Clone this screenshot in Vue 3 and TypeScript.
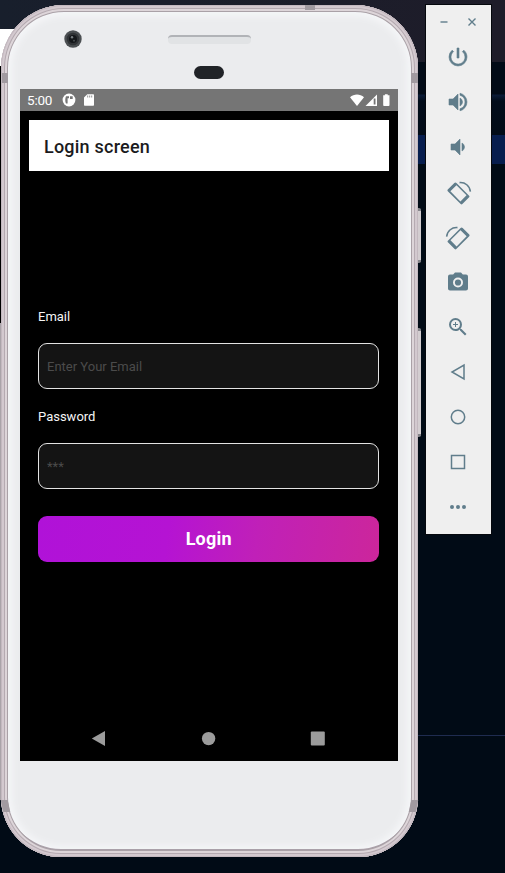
<script setup lang="ts">
interface Tool {
  name: string
  size: number
  fill?: string
  stroke?: string
  heavy?: boolean
}

const tools: Tool[] = [
  { name: 'Power', size: 24, heavy: true, fill: 'M13 3h-2v10h2V3zm4.83 2.17l-1.42 1.42A6.92 6.92 0 0 1 19 12a7 7 0 1 1-11.42-5.42L6.17 5.17A8.93 8.93 0 0 0 3 12a9 9 0 0 0 18 0c0-2.74-1.23-5.18-3.17-6.83z' },
  { name: 'Volume up', size: 24, heavy: true, fill: 'M3 9v6h4l5 5V4L7 9H3zm13.5 3A4.5 4.5 0 0 0 14 7.97v8.05A4.47 4.47 0 0 0 16.5 12zM14 3.23v2.06a7 7 0 0 1 0 13.42v2.06a9 9 0 0 0 0-17.54z' },
  { name: 'Volume down', size: 24, heavy: true, fill: 'M18.5 12A4.5 4.5 0 0 0 16 7.97v8.05A4.47 4.47 0 0 0 18.5 12zM5 9v6h4l5 5V4L9 9H5z' },
  { name: 'Rotate left', size: 25, fill: 'M8 2.800 1.700 9.100Q.9 9.900 1.700 10.700L14.100 23.100Q14.900 23.900 15.700 23.100L22.200 16.600Q23 15.800 22.200 15L10 2.800Q9 1.800 8 2.800zM4.200 10.900 10.060 5.100 19.700 14.740 13.840 20.600z', stroke: 'M13 2.500c5.300-.5 9.800 3.100 10.400 8.600' },
  { name: 'Rotate right', size: 25, fill: 'M16 2.800 22.300 9.100Q23.100 9.900 22.300 10.700L9.900 23.100Q9.100 23.900 8.300 23.100L1.800 16.600Q1 15.800 1.800 15L14 2.800Q15 1.800 16 2.800zM19.800 10.900 13.940 5.100 4.300 14.740 10.160 20.600z', stroke: 'M11 2.500C5.700 2 1.200 5.600.6 11.100' },
  { name: 'Camera', size: 24, fill: 'M9 2.5 7.17 4.5H4a2 2 0 0 0-2 2v12c0 1.100.9 2 2 2h16a2 2 0 0 0 2-2v-12a2 2 0 0 0-2-2h-3.17L15 2.5H9zm3 15a5 5 0 1 1 0-10 5 5 0 0 1 0 10zm0-1.900a3.100 3.100 0 1 0 0-6.200 3.100 3.100 0 0 0 0 6.200z' },
  { name: 'Zoom', size: 24, fill: 'M15.5 14h-.79l-.28-.27A6.47 6.47 0 0 0 16 9.5 6.5 6.5 0 1 0 9.5 16c1.61 0 3.09-.59 4.23-1.57l.27.28v.79l5 4.99L20.49 19l-4.99-5zm-6 0a4.5 4.5 0 1 1 0-9 4.5 4.5 0 0 1 0 9zM9 7h1v2h2v1h-2v2H9v-2H7V9h2z' },
  { name: 'Back', size: 24, stroke: 'M18 5v14L6 12z' },
  { name: 'Home', size: 24, stroke: 'M12 5.3a6.7 6.7 0 1 1 0 13.4 6.7 6.7 0 0 1 0-13.4z' },
  { name: 'Overview', size: 24, stroke: 'M5.5 5.5h13v13h-13z' },
  { name: 'More', size: 24, fill: 'M6 10a2 2 0 1 0 0 4 2 2 0 0 0 0-4zm6 0a2 2 0 1 0 0 4 2 2 0 0 0 0-4zm6 0a2 2 0 1 0 0 4 2 2 0 0 0 0-4z' },
]
</script>

<template>
  <main class="desktop">
    <section class="phone">
      <i class="seam seam-top"></i>
      <i class="seam seam-tl"></i>
      <i class="seam seam-tr"></i>
      <i class="seam seam-bl"></i>
      <i class="seam seam-br"></i>
      <i class="key key-power"></i>
      <i class="key key-volume"></i>

      <div class="forehead">
        <svg class="lens" viewBox="0 0 18 18">
          <circle cx="9" cy="9" r="8.7" fill="#4b4f52" />
          <circle cx="9" cy="9" r="6.3" fill="#303336" />
          <circle cx="9" cy="9" r="4" fill="#14171a" />
          <circle cx="8" cy="7.2" r="1.2" fill="#777d80" />
          <circle cx="10" cy="10.7" r=".9" fill="#4e5356" />
        </svg>
        <div class="speaker"></div>
        <div class="sensor"></div>
      </div>

      <div class="screen">
        <header class="status">
          <span class="clock">5:00</span>
          <svg class="notice" viewBox="0 0 14 14">
            <circle cx="7" cy="7" r="6.4" fill="#fff" />
            <path d="M4 3.200h3v2H5.600v5.200H4c-1-1.700-1-5 0-7.200zM8 3.300h2.700v2.800H8z" fill="#757575" />
          </svg>
          <svg class="card-icon" viewBox="0 0 10 12">
            <path d="M3.300.2H9c.6 0 1 .4 1 1v9.600c0 .6-.4 1-1 1H1c-.6 0-1-.4-1-1V3.500z" fill="#fff" />
            <path d="M3.700 1.500v2M5.700 1.500v2M7.700 1.500v2" stroke="#757575" stroke-width=".8" />
          </svg>
          <svg class="signals" viewBox="0 0 42 13">
            <path d="M0 3.200C4-.4 10-.4 14 3.200L7 12z" fill="#fff" />
            <path d="M15.500 12 27 .5V12z" fill="#fff" />
            <path d="M23.700 4.500h1.800v6h-1.800z" fill="#757575" />
            <path d="M33.200 1.300h1.700V.2h2.800v1.100h1.800v9.800c0 .5-.3.900-.8.900h-4.700c-.5 0-.8-.4-.8-.9z" fill="#fff" />
          </svg>
        </header>

        <div class="app">
          <h1 class="title">Login screen</h1>
          <form class="form" @submit.prevent>
            <label class="label" for="email">Email</label>
            <input id="email" class="field" type="email" placeholder="Enter Your Email" />
            <label class="label" for="password">Password</label>
            <input id="password" class="field" type="password" placeholder="***" />
            <button class="login" type="submit">Login</button>
          </form>
        </div>

        <nav class="nav">
          <svg viewBox="0 0 16 16"><path d="M14 1v15L.8 8.500z" fill="#9b9b9b" /></svg>
          <svg viewBox="0 0 16 16"><circle cx="8.600" cy="8.600" r="6.700" fill="#9b9b9b" /></svg>
          <svg viewBox="0 0 16 16"><rect x="1.800" y="1.500" width="14" height="14" rx="1" fill="#9b9b9b" /></svg>
        </nav>
      </div>
    </section>

    <aside class="toolbar">
      <div class="window-buttons">
        <svg viewBox="0 0 10 10"><path d="M1.500 5h7" /></svg>
        <svg viewBox="0 0 10 10"><path d="M1.500 1.500l7 7M8.500 1.500l-7 7" /></svg>
      </div>
      <div v-for="tool in tools" :key="tool.name" class="tool">
        <svg :width="tool.size" :height="tool.size" viewBox="0 0 24 24">
          <path v-if="tool.fill" class="solid" :class="{ heavy: tool.heavy }" :d="tool.fill" />
          <path v-if="tool.stroke" class="line" :d="tool.stroke" />
        </svg>
      </div>
    </aside>
  </main>
</template>

<style>
body {
  margin: 0;
}
</style>

<style scoped>
* {
  box-sizing: border-box;
}
svg {
  display: block;
  flex: none;
}
.desktop {
  display: flex;
  align-items: flex-start;
  width: 505px;
  height: 873px;
  padding: 5px 0 0 1px;
  overflow: hidden;
  font-family: Roboto, sans-serif;
  background:
    linear-gradient(#fff, #fff) 0 29px / 30px 37px no-repeat,
    linear-gradient(#000, #000) 0 66px / 30px 257px no-repeat,
    linear-gradient(#aaa4a9, #aaa4a9) 0 323px / 1px 477px no-repeat,
    linear-gradient(90deg, #181f2c, #1e1c29) 0 0 / 100% 62px no-repeat,
    linear-gradient(#020b17 0 94px, #0b1b38 95px, #020c1a 101px, #020b17 135px, #071d4e 135px 164px, #010b16 164px 735px, #1f2c50 735px 736px, #010b16 736px);
}
.phone {
  position: relative;
  width: 417px;
  height: 852px;
  flex: none;
  padding: 0 0 0 19px;
  border-radius: 63px 63px 60px 60px;
  background: #ebecee;
  box-shadow:
    inset 0 0 0 1px #c3b8bf,
    inset 0 0 0 3px #d3c9cf,
    inset 0 0 0 4px #b5aab1,
    inset 0 0 0 6px #ddd5d9,
    inset 0 0 0 7px #aaa1a7,
    inset 0 -4px 0 4px #aaa0a9,
    inset 0 0 7px 11px #f5f6f8;
}
.seam,
.key {
  position: absolute;
}
.seam {
  width: 7px;
  height: 10px;
  background: #a19aa0;
}
.seam-top {
  left: 304px;
  top: 0;
  width: 10px;
  height: 5px;
}
.seam-tl {
  left: 1px;
  top: 68px;
  width: 6px;
}
.seam-tr {
  right: 0;
  top: 68px;
}
.seam-bl {
  left: 1px;
  top: 795px;
  height: 12px;
  transform: skewX(12deg);
}
.seam-br {
  right: 1px;
  top: 795px;
  height: 12px;
  transform: skewX(-12deg);
}
.key {
  right: -3px;
  width: 3px;
  height: 109px;
  border: solid #85858a;
  border-width: 3px 0;
  border-radius: 0 2px 2px 0;
  background: #d3cdd0;
}
.key-power {
  top: 203px;
  height: 55px;
}
.key-volume {
  top: 323px;
}
.forehead {
  display: grid;
  grid-template-columns: 44px 104px 83px;
  grid-template-rows: 36px 13px;
  height: 84px;
  padding-top: 25px;
}
.lens {
  width: 18px;
  height: 18px;
  margin-left: 43.5px;
}
.speaker {
  grid-column: 3;
  grid-row: 1;
  width: 83px;
  height: 9px;
  margin-top: 5px;
  border-top: 2px solid #b1b3b7;
  border-radius: 4px;
  background: #e1e3e5;
}
.sensor {
  grid-column: 3;
  grid-row: 2;
  width: 30px;
  height: 13px;
  margin-left: 26px;
  border-radius: 7px;
  background: #202327;
}
.screen {
  display: flex;
  flex-direction: column;
  width: 378px;
  height: 672px;
  background: #000;
}
.status {
  display: flex;
  align-items: center;
  height: 22px;
  padding: 0 7px;
  background: #757575;
  color: #fff;
}
.clock {
  width: 35px;
  font-size: 13.5px;
  letter-spacing: -0.2px;
  line-height: 23px;
}
.notice {
  width: 14px;
  height: 14px;
}
.card-icon {
  width: 10px;
  height: 12px;
  margin-left: 8px;
}
.signals {
  width: 42px;
  height: 13px;
  margin-left: auto;
  margin-right: -1px;
}
.app {
  flex: 1;
  padding: 9px 9px 0;
}
.title {
  width: 359.5px;
  height: 51px;
  margin: 0;
  padding-left: 15px;
  background: #fff;
  color: #1b1b1d;
  font-size: 18px;
  font-weight: 500;
  letter-spacing: 0.22px;
  line-height: 53px;
}
.form {
  display: flex;
  flex-direction: column;
  padding: 137px 9px 0;
}
.label {
  height: 18px;
  margin-bottom: 17px;
  color: #f5f5f5;
  font-size: 13px;
  line-height: 18px;
}
.field {
  width: 341.4px;
  height: 46px;
  margin: 0 0 19px;
  padding: 0 8px;
  border: 1px solid #e3e3e3;
  border-radius: 9px;
  outline: none;
  background: #141414;
  color: #fff;
  font: 13px Roboto, sans-serif;
}
.field::placeholder {
  color: #4b4b4b;
  opacity: 1;
}
.login {
  width: 341.4px;
  height: 46px;
  margin-top: 8px;
  padding: 0;
  border: 0;
  border-radius: 9px;
  background: linear-gradient(98deg, #b012d8 0%, #b513d3 38%, #c020b8 64%, #cc269b 100%);
  color: #fff;
  font: 700 18px/46px Roboto, sans-serif;
  letter-spacing: 0.2px;
}
.nav {
  display: flex;
  gap: 93px;
  height: 31px;
  padding-left: 71px;
}
.nav svg {
  width: 16px;
  height: 16px;
}
.toolbar {
  width: 65px;
  height: 529px;
  flex: none;
  margin-left: 8px;
  background: #efefef;
  box-shadow: 0 0 0 1px #05080d;
}
.window-buttons {
  display: flex;
  align-items: center;
  gap: 18px;
  height: 29.5px;
  padding: 5px 0 0 13px;
}
.window-buttons svg {
  width: 10px;
  height: 10px;
  fill: none;
  stroke: #607d8b;
  stroke-width: 1.4;
}
.tool {
  display: flex;
  align-items: center;
  justify-content: center;
  width: 64px;
  height: 45px;
}
.tool svg {
  overflow: visible;
}
.solid {
  fill: #607d8b;
  fill-rule: evenodd;
}
.heavy {
  stroke: #607d8b;
  stroke-width: 0.6;
}
.line {
  fill: none;
  stroke: #607d8b;
  stroke-width: 1.5;
}
</style>
